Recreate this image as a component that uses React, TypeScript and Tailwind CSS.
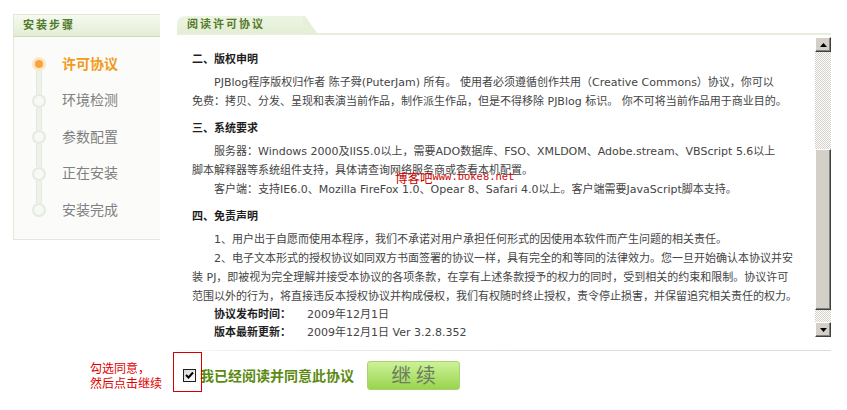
import React from "react";

const steps = [
  { label: "许可协议", active: true },
  { label: "环境检测", active: false },
  { label: "参数配置", active: false },
  { label: "正在安装", active: false },
  { label: "安装完成", active: false },
];

function LeftPanel() {
  return (
    <div className="w-[147px] shrink-0">
      <div className="h-[23px] border-l border-t border-b border-[#dfe8d4] border-b-[#cddcb9] bg-gradient-to-b from-[#f6faf1] to-[#e2edd4] pl-[9px] flex items-center font-bold text-[#4f7a2a] tracking-[2px] text-[11px]">
        安装步骤
      </div>
      <div className="h-[203px] border-l border-b border-[#e2e9dc] bg-[#fbfcfa] pt-[9px]">
        {steps.map((s, i) => (
          <div key={s.label} className="flex h-[36.5px] items-center">
            <div className="ml-[18px] w-[14px] self-stretch flex flex-col items-center">
              <div
                className={
                  "w-[6px] flex-1 " +
                  (i === 0 ? "" : "bg-[#eef2ea] border-x border-[#e3e9dd]")
                }
              />
              {s.active ? (
                <div className="w-[14px] h-[14px] rounded-full bg-[#fde6c6] flex items-center justify-center">
                  <div className="w-[8px] h-[8px] rounded-full bg-[#f7a43a]" />
                </div>
              ) : (
                <div className="w-[14px] h-[14px] rounded-full border-2 border-[#e5eae0] bg-[#f7f9f5]" />
              )}
              <div
                className={
                  "w-[6px] flex-1 " +
                  (i === steps.length - 1 ? "" : "bg-[#eef2ea] border-x border-[#e3e9dd]")
                }
              />
            </div>
            <div
              className={
                "ml-[16px] text-[14px] " +
                (s.active ? "font-bold text-[#f39a1b]" : "text-[#808080]")
              }
            >
              {s.label}
            </div>
          </div>
        ))}
      </div>
    </div>
  );
}

function ScrollButton({ up }: { up: boolean }) {
  return (
    <div className="h-[15px] w-[16px] bg-[#d4d0c8] border border-t-white border-l-white border-b-[#404040] border-r-[#404040] shadow-[inset_-1px_-1px_0_#808080] flex items-center justify-center">
      <svg width="7" height="4" viewBox="0 0 7 4">
        {up ? (
          <polygon points="3.5,0 7,4 0,4" fill="#000" />
        ) : (
          <polygon points="0,0 7,0 3.5,4" fill="#000" />
        )}
      </svg>
    </div>
  );
}

function Track({ h }: { h: string }) {
  return (
    <div
      className={
        "w-[16px] " +
        h +
        " bg-[image:repeating-conic-gradient(#d4d0c8_0_25%,#ffffff_0_50%)] bg-[length:2px_2px]"
      }
    />
  );
}

function Scrollbar() {
  return (
    <div className="w-[16px] shrink-0 flex flex-col">
      <ScrollButton up />
      <Track h="h-[97px]" />
      <div className="h-[161px] w-[16px] bg-[#d4d0c8] border border-t-white border-l-white border-b-[#404040] border-r-[#404040] shadow-[inset_-1px_-1px_0_#808080]" />
      <Track h="h-[12px]" />
      <ScrollButton up={false} />
    </div>
  );
}

function Heading({ children, first }: { children: React.ReactNode; first?: boolean }) {
  return (
    <div className={"font-bold text-[#1e1e1e] mb-[4px] " + (first ? "" : "mt-[8px]")}>
      {children}
    </div>
  );
}

function P({ children }: { children: React.ReactNode }) {
  return <div className="indent-[22px]">{children}</div>;
}

function Agreement() {
  return (
    <div className="relative flex-1 overflow-hidden pl-[15px] pt-[13px] leading-[19px] whitespace-nowrap text-[11px] text-[#444] font-['DejaVu_Sans','Noto_Sans_CJK_SC',sans-serif]">
      <Heading first>二、版权申明</Heading>
      <P>PJBlog程序版权归作者 陈子舜(PuterJam) 所有。 使用者必须遵循创作共用（Creative Commons）协议，你可以</P>
      <div>免费：拷贝、分发、呈现和表演当前作品，制作派生作品，但是不得移除 PJBlog 标识。 你不可将当前作品用于商业目的。</div>
      <Heading>三、系统要求</Heading>
      <P>服务器：Windows 2000及IIS5.0以上，需要ADO数据库、FSO、XMLDOM、Adobe.stream、VBScript 5.6以上</P>
      <div>脚本解释器等系统组件支持，具体请查询网络服务商或查看本机配置。</div>
      <P>客户端：支持IE6.0、Mozilla FireFox 1.0、Opear 8、Safari 4.0以上。客户端需要JavaScript脚本支持。</P>
      <Heading>四、免责声明</Heading>
      <P>1、用户出于自愿而使用本程序，我们不承诺对用户承担任何形式的因使用本软件而产生问题的相关责任。</P>
      <P>2、电子文本形式的授权协议如同双方书面签署的协议一样，具有完全的和等同的法律效力。您一旦开始确认本协议并安</P>
      <div>装 PJ，即被视为完全理解并接受本协议的各项条款，在享有上述条款授予的权力的同时，受到相关的约束和限制。协议许可</div>
      <div>范围以外的行为，将直接违反本授权协议并构成侵权，我们有权随时终止授权，责令停止损害，并保留追究相关责任的权力。</div>
      <div className="pl-[22px] leading-[18px]">
        <span className="font-bold text-[#1e1e1e]">协议发布时间：</span>
        <span className="ml-[16px]">2009年12月1日</span>
      </div>
      <div className="pl-[22px] leading-[15px] mt-[1px]">
        <span className="font-bold text-[#1e1e1e]">版本最新更新：</span>
        <span className="ml-[16px]">2009年12月1日 Ver 3.2.8.352</span>
      </div>
      <div className="absolute left-[218px] top-[134px] flex items-end text-[#cc0000] leading-[13px]">
        <span className="text-[12.5px] font-['Noto_Sans_CJK_SC',sans-serif]">博客吧</span>
        <span className="text-[10.5px] font-['Liberation_Mono',monospace]">www.boke8.net</span>
      </div>
    </div>
  );
}

function RightPanel() {
  return (
    <div className="ml-[17px] mt-[2px] w-[654px] shrink-0">
      <div className="flex h-[19px] border-b-2 border-[#e7efdb]">
        <div className="w-[126px] rounded-tl-[8px] bg-gradient-to-b from-[#edf5e3] to-[#e3eed5] pl-[10px] flex items-center font-bold text-[#557a2b] tracking-[2px] text-[11px]">
          阅读许可协议
        </div>
        <svg width="14" height="17" viewBox="0 0 14 17" className="block">
          <polygon points="0,0 2,0 14,17 0,17" fill="#e6f0d9" />
        </svg>
      </div>
      <div className="mt-[2px] flex h-[301px]">
        <Agreement />
        <Scrollbar />
      </div>
      <div className="mt-[12px] h-px bg-gradient-to-r from-[#f6f6f6] via-[#dedede] to-[#dcdcdc]" />
    </div>
  );
}

function BottomRow() {
  return (
    <div className="flex items-center h-[46px] pl-[90px]">
      <div className="w-[72px] text-[12px] leading-[15px] text-[#e00000] font-['Noto_Sans_CJK_SC',sans-serif] whitespace-nowrap">
        <div>勾选同意，</div>
        <div>然后点击继续</div>
      </div>
      <div className="relative ml-[21px] w-[13px] h-[13px]">
        <div className="w-[13px] h-[13px] border border-[#1f1f1f] bg-gradient-to-br from-[#d6d6d6] to-white flex items-center justify-center">
          <svg width="9" height="9" viewBox="0 0 9 9">
            <polyline points="1,4 3.5,6.5 8,1.5" fill="none" stroke="#000" strokeWidth="2" />
          </svg>
        </div>
        <div className="absolute left-[-10px] top-[-17px] w-[29px] h-[40px] border border-[#d40000]" />
      </div>
      <div className="ml-[4px] text-[14px] font-bold text-[#5b8a12] font-['Noto_Sans_CJK_SC',sans-serif] whitespace-nowrap">
        我已经阅读并同意此协议
      </div>
      <div className="ml-[13px] w-[93px] h-[29px] rounded-[3px] border border-[#a9d271] bg-gradient-to-b from-[#cdf197] to-[#98d54b] flex items-center justify-center text-[20px] text-[#6c7c60] font-['Noto_Sans_CJK_SC',sans-serif] leading-none">
        继 续
      </div>
    </div>
  );
}

export default function App() {
  return (
    <div className="w-[847px] h-[410px] bg-white overflow-hidden font-['Liberation_Sans','Noto_Sans_CJK_SC',sans-serif] text-[11px] text-[#444]">
      <div className="flex pt-[14px] pl-[13px] h-[352px]">
        <LeftPanel />
        <RightPanel />
      </div>
      <BottomRow />
    </div>
  );
}
